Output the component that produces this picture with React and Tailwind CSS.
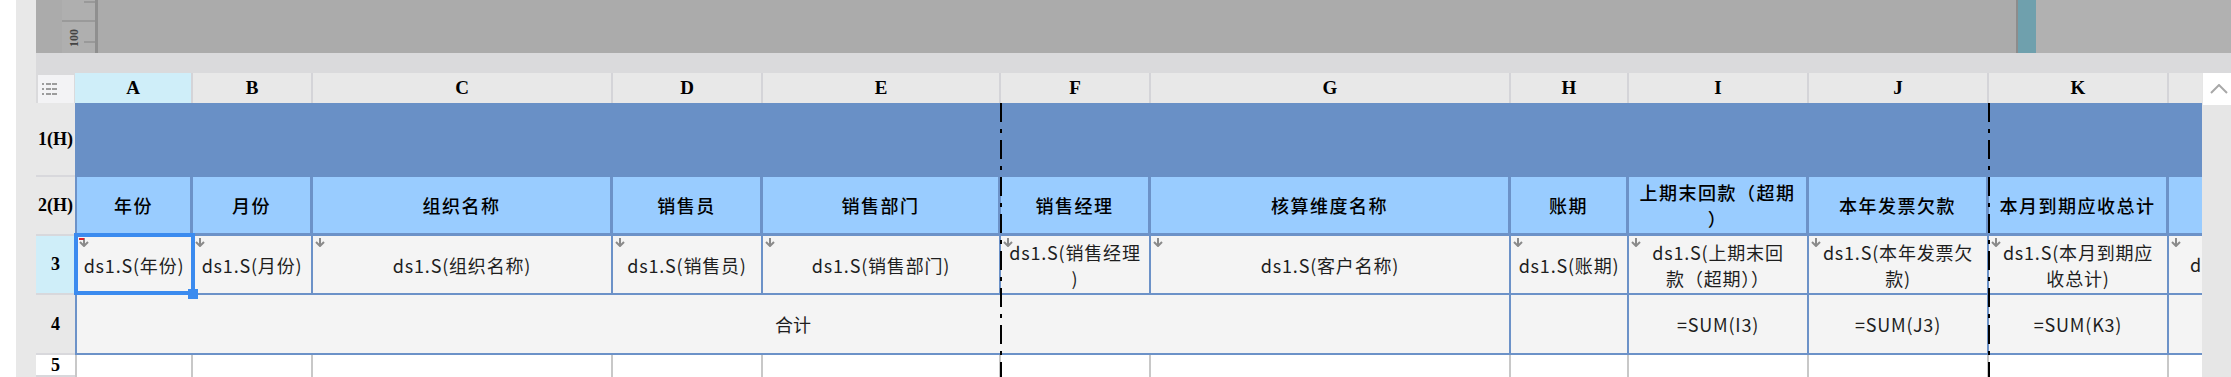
import React from 'react';

const COLS = [
  { id: 'A', head: ['年份'], data: ['ds1.S(年份)'] },
  { id: 'B', head: ['月份'], data: ['ds1.S(月份)'] },
  { id: 'C', head: ['组织名称'], data: ['ds1.S(组织名称)'] },
  { id: 'D', head: ['销售员'], data: ['ds1.S(销售员)'] },
  { id: 'E', head: ['销售部门'], data: ['ds1.S(销售部门)'] },
  { id: 'F', head: ['销售经理'], data: ['ds1.S(销售经理', ')'] },
  { id: 'G', head: ['核算维度名称'], data: ['ds1.S(客户名称)'] },
  { id: 'H', head: ['账期'], data: ['ds1.S(账期)'] },
  { id: 'I', head: ['上期末回款（超期', '）'], data: ['ds1.S(上期末回', '款（超期））'], sum: '=SUM(I3)' },
  { id: 'J', head: ['本年发票欠款'], data: ['ds1.S(本年发票欠', '款)'], sum: '=SUM(J3)' },
  { id: 'K', head: ['本月到期应收总计'], data: ['ds1.S(本月到期应', '收总计)'], sum: '=SUM(K3)' },
  { id: 'L', head: [], data: [] },
];

const cjk = "font-['Noto_Sans_CJK_SC','Noto_Sans',sans-serif]";
const serif = "font-['Liberation_Serif','DejaVu_Serif',serif]";

const GridIcon = () => (
  <svg width="16" height="12" viewBox="0 0 16 12" fill="#9c9c9c">
    <rect x="0" y="0" width="2" height="2" />
    <rect x="0" y="5" width="2" height="2" />
    <rect x="0" y="10" width="2" height="2" />
    <rect x="4" y="0" width="5" height="2" />
    <rect x="4" y="5" width="5" height="2" />
    <rect x="4" y="10" width="5" height="2" />
    <rect x="10" y="0" width="5" height="2" />
    <rect x="10" y="5" width="5" height="2" />
    <rect x="10" y="10" width="5" height="2" />
  </svg>
);

const ExpandMark = () => (
  <svg className="absolute left-[2px] top-[2px]" width="10" height="9" viewBox="0 0 10 9" fill="none" stroke="#8a8a8a" strokeWidth="2">
    <path d="M5 0V8M1 4L5 8L9 4" />
  </svg>
);

const PageBreak = ({ left }) => (
  <div className={`pointer-events-none absolute top-[30px] bottom-0 w-[2px] z-20 ${left}`}>
    <svg className="block h-full w-full">
      <line x1="1" y1="0" x2="1" y2="100%" stroke="#000" strokeWidth="2" strokeDasharray="19 7 4 7" />
    </svg>
  </div>
);

const RowHead = ({ label, tone = 'bg-[#e8e8e8]' }) => (
  <div className={`flex items-center justify-center border-b-2 border-[#d8d8dc] text-[18px] font-bold text-black ${serif} ${tone}`}>
    {label}
  </div>
);

const Lines = ({ lines, className = '' }) => (
  <div className={`flex flex-col items-center leading-[26px] ${className}`}>
    {lines.map((l, i) => (
      <span key={i} className="whitespace-nowrap">{l}</span>
    ))}
  </div>
);

export default function App() {
  return (
    <div className={`flex h-[377px] w-[2231px] overflow-hidden bg-white ${cjk}`}>
      <div className="w-4 shrink-0 bg-white" />
      <div className="w-5 shrink-0 bg-[#e8e8e8]" />

      <div className="flex flex-1 flex-col">
        {/* ruler strip */}
        <div className="flex h-[53px] bg-[#ababab]">
          <div className="w-[26px]" />
          <div className="flex w-[36px] flex-col border-r-[3px] border-[#8f8f8f] bg-[#afafaf]">
            <div className="relative h-[22px] border-b-2 border-[#9a9a9a]">
              <div className="absolute right-0 top-px h-[2px] w-[11px] bg-[#999]" />
            </div>
            <div className="relative flex flex-1 items-center pl-[3px]">
              <span className={`block -rotate-90 text-[12px] font-bold leading-none text-[#444] ${serif}`}>100</span>
              <div className="absolute right-0 top-[19px] h-[2px] w-[11px] bg-[#999]" />
            </div>
          </div>
          <div className="flex-1" />
          <div className="w-[20px] border-l-2 border-[#8c8c8c] bg-[#6fa0ad]" />
          <div className="w-[195px] bg-[#b1b1b1]" />
        </div>
        <div className="h-[20px] bg-[#dadadc]" />

        <div className="flex flex-1">
          <div className="relative grid w-[2166px] grid-cols-[39px_118px_120px_300px_150px_238px_150px_360px_118px_180px_180px_180px_33px] grid-rows-[30px_74px_59px_59px_60px_22px]">
            {/* column letters */}
            <div className="bg-[#dadadc] pl-[2px] pr-px pt-[2px]">
              <div className="flex h-full items-center bg-[#f3f3f5] pl-[4px]">
                <GridIcon />
              </div>
            </div>
            {COLS.map((c) => (
              <div
                key={c.id}
                className={`flex items-center justify-center text-[19px] font-bold text-black ${serif} ${
                  c.id === 'A' ? 'bg-[#cfeef9]' : 'bg-[#e8e8e8]'
                } ${c.id === 'L' ? '' : 'border-r-2 border-[#d4d4d8]'}`}
              >
                {c.id === 'L' ? '' : c.id}
              </div>
            ))}

            {/* row 1 */}
            <RowHead label="1(H)" />
            <div className="col-span-12 bg-[#6990c6]" />

            {/* row 2 */}
            <RowHead label="2(H)" />
            {COLS.map((c) => (
              <div
                key={c.id}
                className={`flex items-center justify-center border-b-[3px] border-[#6c92c8] bg-[#99ccff] text-[18px] font-medium tracking-[1.5px] text-black ${
                  c.id === 'L' ? '' : 'border-r-[3px]'
                } ${c.id === 'A' ? 'border-l-2' : ''}`}
              >
                <Lines lines={c.head} />
              </div>
            ))}

            {/* row 3 */}
            <RowHead label="3" tone="bg-[#cfeef9]" />
            {COLS.map((c) => (
              <div
                key={c.id}
                className={`relative flex items-center border-b-2 border-[#6c92c8] bg-[#f4f4f4] text-[18px] tracking-[0.8px] text-[#1e1e1e] ${
                  c.id === 'L' ? 'overflow-hidden justify-start pl-[21px]' : 'justify-center border-r-2'
                } ${c.id === 'A' ? 'border-l-2' : ''}`}
              >
                <ExpandMark />
                {c.id === 'A' && (
                  <>
                    <div className="absolute left-[2px] top-[2px] h-[2px] w-[5px] bg-[#e0202a]" />
                    <div className="absolute -left-[3px] -right-[4px] -top-[3px] -bottom-[2px] z-10 border-4 border-[#3b8bef]" />
                    <div className="absolute -bottom-[6px] -right-[7px] z-10 h-[10px] w-[10px] bg-[#3b8bef]" />
                  </>
                )}
                {c.id === 'L' ? (
                  <span className="whitespace-nowrap">ds1.S(本年回款)</span>
                ) : (
                  <Lines lines={c.data} />
                )}
              </div>
            ))}

            {/* row 4 */}
            <RowHead label="4" />
            <div className="col-span-7 flex items-center justify-center border-b-2 border-l-2 border-r-2 border-[#6c92c8] bg-[#f4f4f4] text-[18px] text-[#1e1e1e]">
              合计
            </div>
            {COLS.slice(7).map((c) => (
              <div
                key={c.id}
                className={`flex items-center justify-center border-b-2 border-[#6c92c8] bg-[#f4f4f4] text-[18px] tracking-[0.8px] text-[#1e1e1e] ${
                  c.id === 'L' ? '' : 'border-r-2'
                }`}
              >
                {c.sum || ''}
              </div>
            ))}

            {/* row 5 */}
            <RowHead label="5" tone="bg-white" />
            {COLS.map((c) => (
              <div
                key={c.id}
                className={`bg-white ${c.id === 'L' ? '' : 'border-r-2 border-[#c8c8c8]'} ${
                  c.id === 'A' ? 'border-l-2 border-[#c8c8c8]' : ''
                }`}
              />
            ))}

            <PageBreak left="left-[964px]" />
            <PageBreak left="left-[1952px]" />
          </div>

          {/* vertical scrollbar */}
          <div className="flex w-[29px] flex-col bg-[#e6e6e6] pl-px">
            <div className="flex h-[32px] items-center justify-center bg-white pl-[3px]">
              <svg width="18" height="10" viewBox="0 0 18 10" fill="none" stroke="#a8a8a8" strokeWidth="2">
                <path d="M1 9L9 1L17 9" />
              </svg>
            </div>
          </div>
        </div>
      </div>
    </div>
  );
}
